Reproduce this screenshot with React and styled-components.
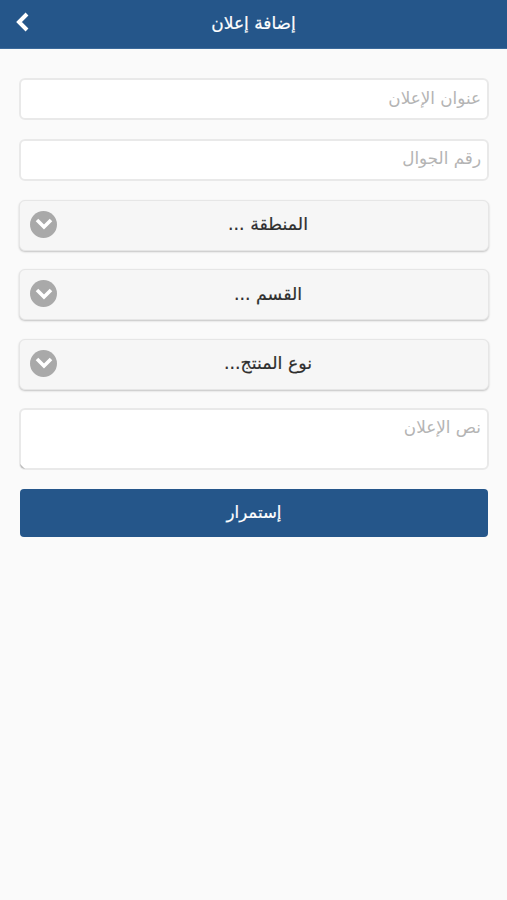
import React from 'react';
import styled, { createGlobalStyle } from 'styled-components';

const GlobalStyle = createGlobalStyle`
  html, body {
    margin: 0;
    padding: 0;
    background: #fafafa;
  }
  * {
    box-sizing: border-box;
  }
`;

const Page = styled.div`
  width: 507px;
  height: 900px;
  background: #fafafa;
  font-family: "DejaVu Sans", "Noto Sans", sans-serif;
  direction: rtl;
`;

const TopBar = styled.header`
  position: relative;
  height: 49px;
  background: #25568a;
  border-bottom: 1px solid #3c6a9b;
  display: flex;
  align-items: center;
  justify-content: center;
  padding-bottom: 2px;
`;

const Title = styled.h1`
  margin: 0;
  color: #fff;
  font-size: 17px;
  font-weight: 400;
  -webkit-text-stroke: 0.2px #fff;
`;

const BackButton = styled.button`
  position: absolute;
  left: 14px;
  top: 11px;
  width: 18px;
  height: 22px;
  padding: 0;
  border: 0;
  background: none;
  display: flex;
`;

const Form = styled.form`
  display: flex;
  flex-direction: column;
  gap: 18.5px;
  padding: 29px 18px 0 19px;
`;

const TextBox = styled.div`
  position: relative;
  height: ${(p) => p.$height}px;
  background: #fff;
  border: 2px solid #e9e9e9;
  border-radius: 6px;
  padding: ${(p) => (p.$multi ? '7px 6px 0 0' : '0 6px 3px 0')};
  display: flex;
  align-items: ${(p) => (p.$multi ? 'flex-start' : 'center')};
  color: #b4b4b4;
  font-size: 16.8px;
`;

// the little resize grip in the corner of the textarea
const ResizeGrip = styled.span`
  position: absolute;
  left: -1px;
  bottom: -1px;
  width: 6px;
  height: 6px;
  background: linear-gradient(45deg, #bcbcbc 35%, transparent 50%);
  border-bottom-left-radius: 5px;
`;

const SelectBox = styled.div`
  position: relative;
  height: 51px;
  background: #f6f6f6;
  border: 1px solid #e6e6e6;
  border-radius: 6px;
  box-shadow: 0 1px 2px rgba(0, 0, 0, 0.22);
  display: flex;
  align-items: center;
  justify-content: center;
  color: #2e2e2e;
  font-size: 17.4px;
  -webkit-text-stroke: 0.2px #2e2e2e;
  padding: 0 0 2px 28px;
`;

const Chevron = styled.span`
  position: absolute;
  left: 10px;
  top: 10px;
  width: 27px;
  height: 27px;
  border-radius: 50%;
  background: #a9a9a9;
  display: flex;
  align-items: center;
  justify-content: center;
`;

const SubmitButton = styled.button`
  height: 48px;
  margin: 0 1px;
  border: 0;
  border-radius: 4px;
  background: #25568a;
  color: #fff;
  font-family: inherit;
  font-size: 16.6px;
  -webkit-text-stroke: 0.2px #fff;
  padding: 0;
`;

const selects = ['المنطقة ...', 'القسم ...', 'نوع المنتج...'];

const App = () => {
  return (
    <Page>
      <GlobalStyle />
      <TopBar>
        <Title>إضافة إعلان</Title>
        <BackButton aria-label="رجوع">
          <svg width="18" height="22" viewBox="0 0 18 22">
            <path d="M13 3 L5 11 L13 19" fill="none" stroke="#fff" strokeWidth="4" />
          </svg>
        </BackButton>
      </TopBar>
      <Form>
        <TextBox $height={42}>عنوان الإعلان</TextBox>
        <TextBox $height={42.5}>رقم الجوال</TextBox>
        {selects.map((label) => (
          <SelectBox key={label}>
            {label}
            <Chevron>
              <svg width="20" height="14" viewBox="0 0 20 14">
                <path d="M3 3 L10 10 L17 3" fill="none" stroke="#fff" strokeWidth="3.6" />
              </svg>
            </Chevron>
          </SelectBox>
        ))}
        <TextBox $height={62} $multi>
          نص الإعلان
          <ResizeGrip />
        </TextBox>
        <SubmitButton type="button">إستمرار</SubmitButton>
      </Form>
    </Page>
  );
};

export default App;
